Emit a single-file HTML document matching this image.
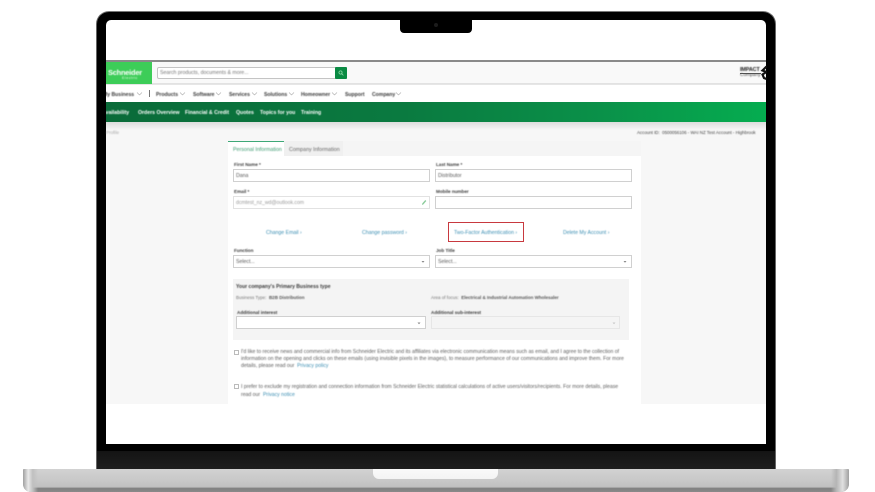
<!DOCTYPE html>
<html><head><meta charset="utf-8">
<style>
html,body{margin:0;padding:0;background:#fff}
body{width:875px;height:492px;overflow:hidden;position:relative;font-family:"Liberation Sans",sans-serif}
div,span,a{position:absolute;box-sizing:border-box;white-space:nowrap}
.t{filter:blur(.45px);line-height:1;transform:translateY(1px)}
.lbl{font-size:4.6px;font-weight:bold;color:#3a3a3a}
.inp{background:#fff;border:1px solid #d0d0d0;height:13px}
.val{font-size:5.2px;color:#5a5a5a}
.lnk{font-size:5.2px;color:#3d8fb3}
.nav{font-size:5.1px;font-weight:bold;color:#3a3a3a;top:92px}
.sub{font-size:5.2px;font-weight:bold;color:#fff}
.para{font-size:5.13px;color:#5c5c5c}
.cb{width:5px;height:5px;border:1px solid #bbb;background:#fff;left:234px}
svg{position:absolute;overflow:visible}
</style></head><body>

<!-- laptop frame -->
<div style="left:96px;top:11px;width:680px;height:458px;background:#000;border-radius:13px 13px 0 0;border-top:1px solid #777;border-left:1px solid #666;border-right:1px solid #666"></div>
<div style="left:97px;top:451px;width:678px;height:18px;background:linear-gradient(#141414,#1e1e1e)"></div>

<!-- screen -->
<div style="left:106px;top:20px;width:660px;height:424px;background:#fff;border-radius:5px 5px 0 0;overflow:hidden">
  <div style="left:0;top:40px;width:660px;height:2px;background:#8a8a8a"></div>
  <div style="left:0;top:42px;width:660px;height:22px;background:#f9f9f9;border-bottom:1px solid #e2e2e2"></div>
  <div style="left:0;top:42px;width:46px;height:22px;background:#3dcd58"></div>
  <div style="left:0;top:82px;width:660px;height:20px;background:linear-gradient(90deg,#0a6b39,#0a7a40 45%,#0a9149 75%,#05ad50);"></div>
  <div style="left:0;top:102px;width:660px;height:282px;background:#f7f7f7"></div>
  <div style="left:0;top:102px;width:660px;height:8px;background:linear-gradient(#dcdcdc,#f7f7f7)"></div>
</div>

<!-- notch -->
<div style="left:400px;top:20px;width:72px;height:13px;background:#000;border-radius:0 0 4px 4px"></div>
<div style="left:434px;top:23px;width:4px;height:4px;border-radius:50%;background:#1c1c1c"></div>

<!-- header -->
<div class="t" style="left:108px;top:68px;font-size:7.4px;font-weight:bold;color:#fff;letter-spacing:-.2px">Schneider</div>
<div class="t" style="left:122px;top:75.5px;font-size:3.6px;color:#e8ffe8;letter-spacing:.5px">Electric</div>
<div style="left:157px;top:67px;width:190px;height:12px;background:#fff;border:1px solid #c4c4c4;border-radius:2px"></div>
<div class="t" style="left:160px;top:69.500px;font-size:5.2px;color:#777">Search products, documents &amp; more...</div>
<div style="left:335px;top:67px;width:12px;height:12px;background:#0a8a43;border-radius:1px"></div>
<svg style="left:338px;top:70px" width="6" height="6" viewBox="0 0 6 6"><circle cx="2.5" cy="2.5" r="1.6" fill="none" stroke="#8fd8a8" stroke-width=".8"/><path d="M3.7 3.7L5.400 5.400" stroke="#8fd8a8" stroke-width=".8"/></svg>

<div class="t" style="left:740px;top:66.5px;font-size:5.4px;font-weight:bold;color:#222;letter-spacing:-.1px">IMPACT</div>
<div style="left:740px;top:72.5px;width:21px;height:.7px;background:#555"></div>
<div class="t" style="left:740px;top:73px;font-size:4.8px;color:#444">Company</div>
<svg style="left:761px;top:65px" width="6" height="15" viewBox="0 0 6 15"><path d="M5.500 1.500L1.500 5.500L5.500 7M5.500 7L1.500 9.500L3 13L5.500 14" fill="none" stroke="#111" stroke-width="2.2"/></svg>

<!-- nav -->
<div style="left:106px;top:84px;width:660px;height:1px;background:#e6e6e6"></div>
<div style="left:106px;top:85px;width:44px;height:17px;overflow:hidden"><div class="t nav" style="left:-3px;top:7px">My Business</div></div>
<div style="left:149px;top:90px;width:1px;height:7px;background:#777"></div>
<div class="t nav" style="left:156px">Products</div>
<div class="t nav" style="left:193px">Software</div>
<div class="t nav" style="left:229px">Services</div>
<div class="t nav" style="left:264px">Solutions</div>
<div class="t nav" style="left:301px">Homeowner</div>
<div class="t nav" style="left:345px">Support</div>
<div class="t nav" style="left:372px">Company</div>
<svg style="left:0;top:0" width="875" height="120" fill="none" stroke="#aaa" stroke-width=".6">
<path d="M137 92.500l2.500 2.500 2.500-2.500M180 92.500l2.500 2.500 2.500-2.500M216 92.500l2.500 2.500 2.500-2.500M252 92.500l2.500 2.500 2.500-2.500M289 92.500l2.500 2.500 2.500-2.500M332 92.500l2.500 2.500 2.500-2.500M396 92.500l2.500 2.500 2.500-2.500"/>
</svg>

<!-- sub nav -->
<div style="left:106px;top:102px;width:660px;height:20px;overflow:hidden">
  <div class="t sub" style="left:-4px;top:8px">Availability</div>
  <div class="t sub" style="left:32px;top:8px">Orders Overview</div>
  <div class="t sub" style="left:79px;top:8px">Financial &amp; Credit</div>
  <div class="t sub" style="left:130px;top:8px">Quotes</div>
  <div class="t sub" style="left:154px;top:8px">Topics for you</div>
  <div class="t sub" style="left:195px;top:8px">Training</div>
</div>

<div class="t" style="left:106px;top:130px;font-size:4.6px;color:#aaa">Profile</div>
<div class="t" style="left:637px;top:130px;font-size:4.4px;color:#444">Account ID: &nbsp;0500056106 - WAI NZ Test Account - Highbrook</div>

<!-- card -->
<div style="left:228px;top:141px;width:413px;height:263px;background:#fff"></div>
<div style="left:228px;top:141px;width:413px;height:15px;background:#f5f5f5"></div>
<div style="left:228px;top:141px;width:56px;height:15px;background:#fff;border-top:1px solid #3da877"></div>
<div style="left:284px;top:141px;width:59px;height:15px;background:#f0f0f0"></div>
<div class="t" style="left:233px;top:146.500px;font-size:5.3px;color:#3c9a70">Personal Information</div>
<div class="t" style="left:289px;top:146.500px;font-size:5.3px;color:#666">Company Information</div>

<div class="t lbl" style="left:234px;top:162px">First Name *</div>
<div class="inp" style="left:233px;top:169px;width:197px"></div>
<div class="t val" style="left:236px;top:173px">Dana</div>
<div class="t lbl" style="left:436px;top:162px">Last Name *</div>
<div class="inp" style="left:435px;top:169px;width:197px"></div>
<div class="t val" style="left:438px;top:173px">Distributor</div>

<div class="t lbl" style="left:234px;top:189px">Email *</div>
<div class="inp" style="left:233px;top:196px;width:197px;border-color:#e2e2e2"></div>
<div class="t val" style="left:236px;top:200px;color:#9a9a9a;font-size:5.1px">dcmtest_nz_wd@outlook.com</div>
<svg style="left:421px;top:199px" width="6" height="7" viewBox="0 0 6 7"><path d="M1 6L1.300 4.400 4.300 1l1 1L2.400 5.400Z" fill="#8ccc9c"/></svg>
<div class="t lbl" style="left:436px;top:189px">Mobile number</div>
<div class="inp" style="left:435px;top:196px;width:197px"></div>

<div class="t lnk" style="left:266px;top:230px">Change Email ›</div>
<div class="t lnk" style="left:362px;top:230px">Change password ›</div>
<div class="t lnk" style="left:454px;top:230px">Two-Factor Authentication ›</div>
<div style="left:448px;top:222px;width:76px;height:20px;border:1.500px solid #c8393f"></div>
<div class="t lnk" style="left:563px;top:230px">Delete My Account ›</div>

<div class="t lbl" style="left:234px;top:248px">Function</div>
<div class="inp" style="left:233px;top:255px;width:197px"></div>
<div class="t val" style="left:236px;top:259px">Select...</div>
<div class="t lbl" style="left:436px;top:248px">Job Title</div>
<div class="inp" style="left:435px;top:255px;width:197px"></div>
<div class="t val" style="left:438px;top:259px">Select...</div>
<svg style="left:0;top:0" width="875" height="340" fill="#888">
<path d="M421.500 261h3l-1.500 1.800zM623.500 261h3l-1.500 1.800z"/>
</svg>

<!-- business type -->
<div style="left:233px;top:279px;width:396px;height:61px;background:#f4f4f4"></div>
<div class="t" style="left:236px;top:284px;font-size:5.05px;font-weight:bold;color:#3a3a3a">Your company's Primary Business type</div>
<div class="t" style="left:236px;top:295px;font-size:4.5px;color:#777">Business Type: &nbsp;<span style="position:static;color:#555;font-weight:bold">B2B Distribution</span></div>
<div class="t" style="left:431px;top:295px;font-size:4.5px;color:#777">Area of focus: &nbsp;<span style="position:static;color:#555;font-weight:bold">Electrical &amp; Industrial Automation Wholesaler</span></div>
<div class="t lbl" style="left:237px;top:310px">Additional interest</div>
<div style="left:236px;top:316px;width:190px;height:13px;background:#fff;border:1px solid #d0d0d0"></div>
<div class="t lbl" style="left:431px;top:310px">Additional sub-interest</div>
<div style="left:431px;top:316px;width:189px;height:13px;background:#f4f4f4;border:1px solid #e6e6e6"></div>
<svg style="left:0;top:0" width="875" height="340" fill="#888">
<path d="M417.500 322.500h3l-1.500 1.800z"/><path d="M612.500 322.500h3l-1.500 1.800z" fill="#c8c8c8"/>
</svg>

<!-- consent -->
<div class="cb" style="top:349.500px"></div>
<div class="t para" style="left:241px;top:349px">I'd like to receive news and commercial info from Schneider Electric and its affiliates via electronic communication means such as email, and I agree to the collection of</div>
<div class="t para" style="left:241px;top:356px">information on the opening and clicks on these emails (using invisible pixels in the images), to measure performance of our communications and improve them. For more</div>
<div class="t para" style="left:241px;top:363px">details, please read our &nbsp;<span style="position:static;color:#3d8fb3">Privacy policy</span></div>
<div class="cb" style="top:383.500px"></div>
<div class="t para" style="left:241px;top:383.500px">I prefer to exclude my registration and connection information from Schneider Electric statistical calculations of active users/visitors/recipients. For more details, please</div>
<div class="t para" style="left:241px;top:391.500px">read our &nbsp;<span style="position:static;color:#3d8fb3">Privacy notice</span></div>

<!-- base -->
<div style="left:23px;top:469px;width:826px;height:23px;border-radius:1px 1px 8px 8px;overflow:hidden;background:linear-gradient(#d2d2d2,#c8c8c8 50%,#c0c0c0 78%,#808080 84%,#8a8a8a)">
  <div style="left:0;top:0;width:15px;height:23px;background:linear-gradient(90deg,#a0a0a0,#e8e8e8 35%,#c0c0c0 65%,rgba(190,190,190,0))"></div>
  <div style="right:0;top:0;width:18px;height:23px;background:linear-gradient(270deg,#a0a0a0,#e0e0e0 35%,#b5b5b5 70%,rgba(190,190,190,0))"></div>
</div>
<div style="left:373px;top:469px;width:125px;height:10px;background:linear-gradient(#fafafa,#f4f4f4);border-radius:0 0 6px 6px"></div>

</body></html>
